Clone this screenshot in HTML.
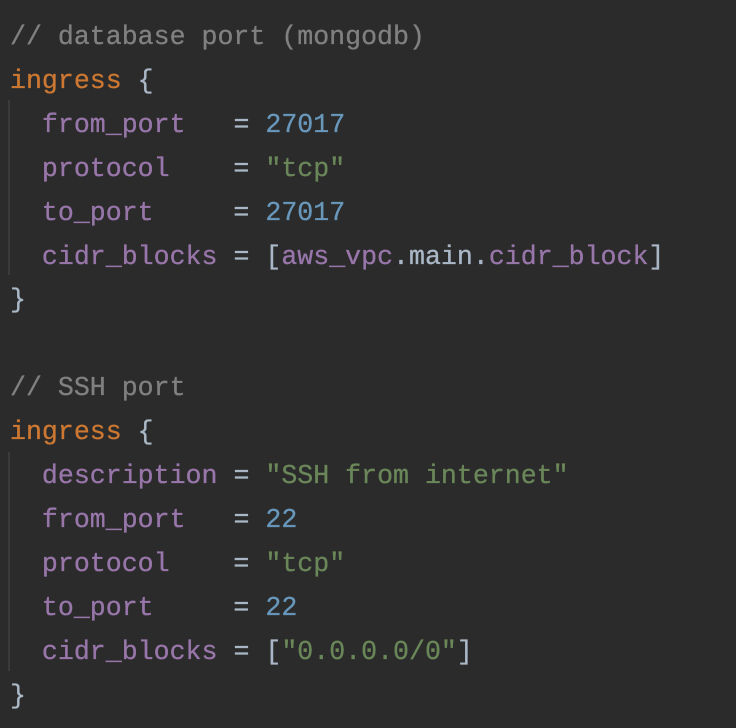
<!DOCTYPE html><html><head><style>
html,body{margin:0;padding:0;background:#2b2b2b;width:736px;height:728px;overflow:hidden}
pre{margin:0;padding:16px 0 0 10px;font-family:"Liberation Mono",monospace;font-size:26.6px;line-height:43.9px;color:#a9b7c6;position:relative;-webkit-text-stroke:0.3px}
.c{color:#808080}.k{color:#cc7832}.p{color:#9876aa}.n{color:#6897bb}.s{color:#6a8759}
.g{position:absolute;left:8px;width:2px;background:#3b3b3b}
</style></head><body>
<div class="g" style="top:100px;height:175px"></div>
<div class="g" style="top:452px;height:219px"></div>
<pre><span class="c">// database port (mongodb)</span>
<span class="k">ingress</span> {
  <span class="p">from_port</span>   = <span class="n">27017</span>
  <span class="p">protocol</span>    = <span class="s">"tcp"</span>
  <span class="p">to_port</span>     = <span class="n">27017</span>
  <span class="p">cidr_blocks</span> = [<span class="p">aws_vpc</span>.main.<span class="p">cidr_block</span>]
}

<span class="c">// SSH port</span>
<span class="k">ingress</span> {
  <span class="p">description</span> = <span class="s">"SSH from internet"</span>
  <span class="p">from_port</span>   = <span class="n">22</span>
  <span class="p">protocol</span>    = <span class="s">"tcp"</span>
  <span class="p">to_port</span>     = <span class="n">22</span>
  <span class="p">cidr_blocks</span> = [<span class="s">"0.0.0.0/0"</span>]
}</pre>
</body></html>
